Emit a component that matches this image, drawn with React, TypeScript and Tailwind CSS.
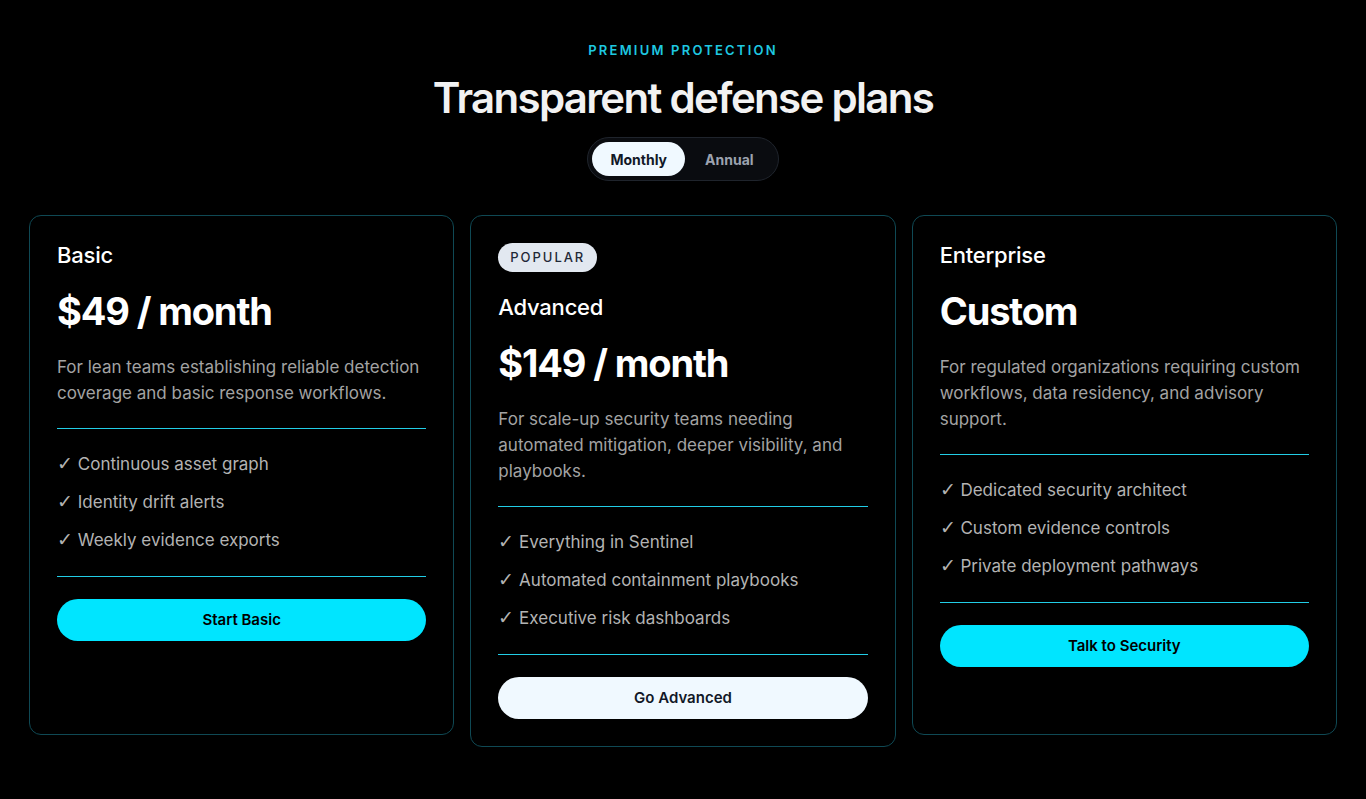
const plans = [
  {
    name: "Basic",
    price: "$49 / month",
    desc: "For lean teams establishing reliable detection coverage and basic response workflows.",
    features: ["Continuous asset graph", "Identity drift alerts", "Weekly evidence exports"],
    cta: "Start Basic",
    popular: false,
  },
  {
    name: "Advanced",
    price: "$149 / month",
    desc: "For scale-up security teams needing automated mitigation, deeper visibility, and playbooks.",
    features: ["Everything in Sentinel", "Automated containment playbooks", "Executive risk dashboards"],
    cta: "Go Advanced",
    popular: true,
  },
  {
    name: "Enterprise",
    price: "Custom",
    desc: "For regulated organizations requiring custom workflows, data residency, and advisory support.",
    features: ["Dedicated security architect", "Custom evidence controls", "Private deployment pathways"],
    cta: "Talk to Security",
    popular: false,
  },
];

const PlanCard = ({ plan }: { plan: (typeof plans)[number] }) => (
  <div className="flex flex-col min-h-[520px] rounded-xl border border-[#0f4954] bg-black p-[27px]">
    {plan.popular && (
      <span className="self-start h-[29px] flex items-center rounded-full bg-[#e2e8f0] px-3 text-[13px] font-medium tracking-[0.15em] text-[#1f2937] mb-[23px]">
        POPULAR
      </span>
    )}
    <h3 className="text-[22px] leading-[24px] font-medium tracking-[-0.01em] text-white">{plan.name}</h3>
    <p className="mt-5 text-[38px] leading-[48px] font-bold tracking-[-0.03em] text-white">{plan.price}</p>
    <p className="mt-[19px] text-[17px] leading-[26px] text-[#a3a3a3]">{plan.desc}</p>
    <div className="mt-[22px] h-px bg-[#22cde6]" />
    <ul className="flex flex-col gap-3 pt-[22px] pb-[23px]">
      {plan.features.map((f) => (
        <li key={f} className="h-[26px] text-[17px] leading-[26px] text-[#b3b3b3]">
          <span className="font-['DejaVu_Sans',sans-serif] font-extralight text-[19px] leading-none">✓</span> {f}
        </li>
      ))}
    </ul>
    <div className="h-px bg-[#22cde6]" />
    <button
      className={
        plan.popular
          ? "mt-[22px] h-[42px] rounded-full bg-[#f0f9ff] text-[15px] font-semibold text-[#111827]"
          : "mt-[22px] h-[42px] rounded-full bg-[#00e5ff] text-[15px] font-semibold text-black"
      }
    >
      {plan.cta}
    </button>
  </div>
);

export default function App() {
  return (
    <div className="min-h-screen bg-black font-['Inter',sans-serif] pt-10 pb-12">
      <div className="flex flex-col items-center">
        <p className="text-[13px] leading-[20px] font-semibold tracking-[0.17em] text-[#1ec8e0]">
          PREMIUM PROTECTION
        </p>
        <h1 className="mt-[15px] text-[42px] leading-[46px] font-semibold tracking-[-0.04em] text-[#f2f2f2]">
          Transparent defense plans
        </h1>
        <div className="mt-4 flex items-center rounded-full border border-[#1f242c] bg-[#0a0c10] p-1">
          <button className="h-[34px] rounded-full bg-[#f0f9ff] px-[18px] text-[14px] font-bold text-[#111827]">
            Monthly
          </button>
          <button className="h-[34px] rounded-full px-[20px] text-[14px] font-bold text-[#9ca3af]">
            Annual
          </button>
        </div>
      </div>
      <div className="mt-[34px] grid grid-cols-3 items-start gap-4 px-[29px]">
        {plans.map((p) => (
          <PlanCard key={p.name} plan={p} />
        ))}
      </div>
    </div>
  );
}
